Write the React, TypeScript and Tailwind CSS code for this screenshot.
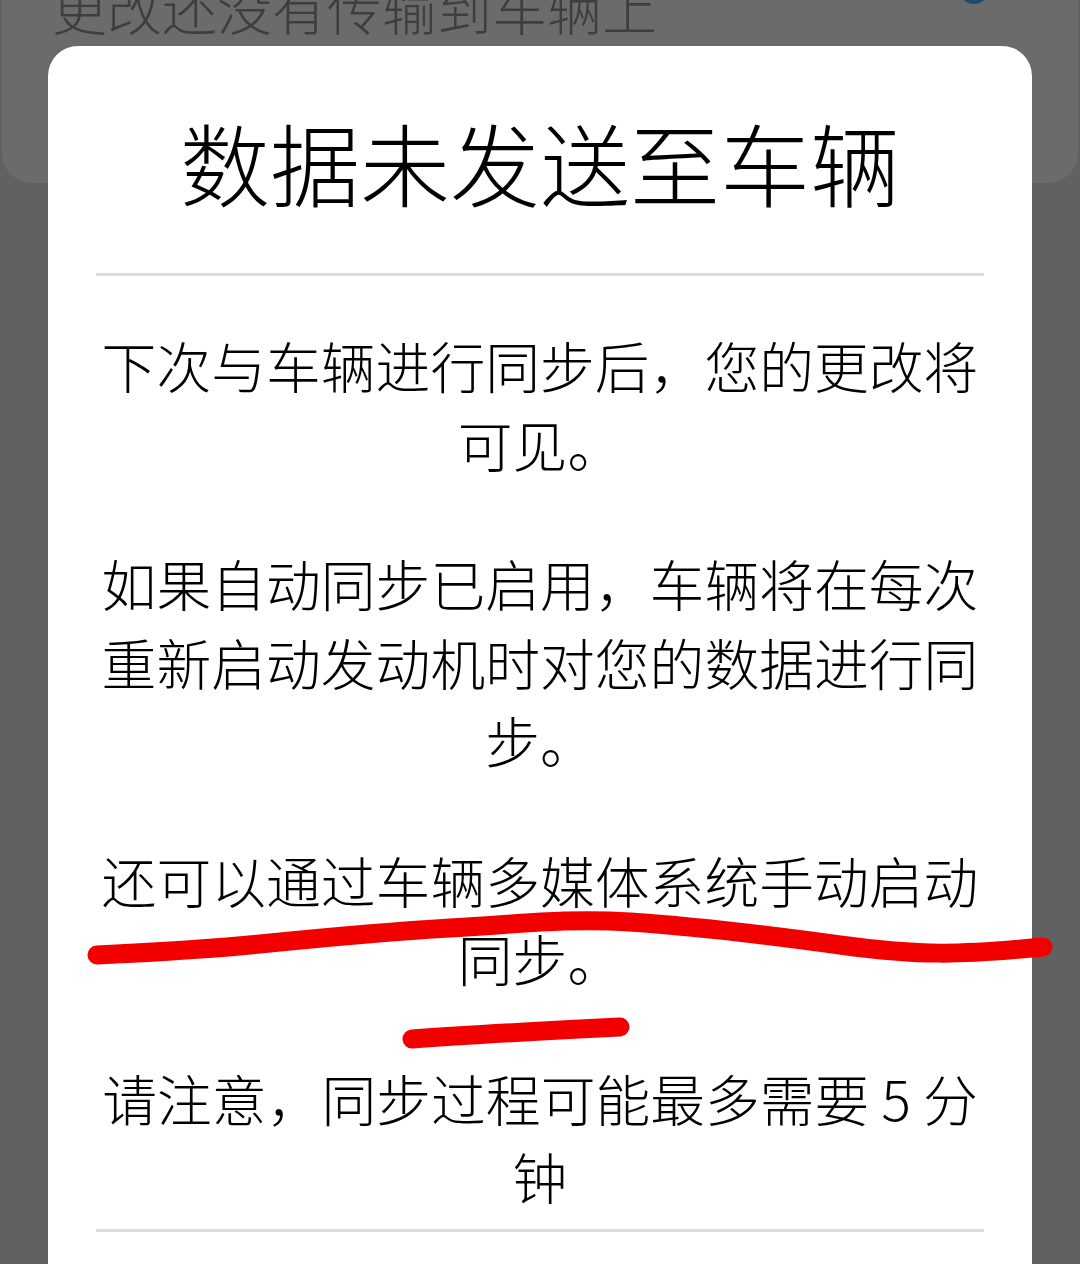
const paragraphs = [
  '下次与车辆进行同步后，您的更改将可见。',
  '如果自动同步已启用，车辆将在每次重新启动发动机时对您的数据进行同步。',
  '还可以通过车辆多媒体系统手动启动同步。',
  '请注意，同步过程可能最多需要 5 分钟',
];

export default function App() {
  return (
    <div
      className="relative w-[1080px] h-[1264px] overflow-hidden bg-[#616161]"
      style={{ fontFamily: '"Noto Sans CJK SC", "Noto Sans", sans-serif' }}
    >
      {/* page behind the scrim */}
      <div className="relative mx-[2px] -mt-[48px] h-[231px] rounded-b-[30px] bg-[#6b6b6b] px-[50px] pt-[22px]">
        <div className="text-[55px] leading-[64px] font-light text-[#3e3e3e]">更改还没有传输到车辆上</div>
        <div className="absolute left-[957px] top-[22px] h-[30px] w-[30px] rounded-full bg-[#1d4a72]" />
      </div>

      {/* dialog */}
      <div className="absolute left-[48px] top-[46px] bottom-0 w-[984px] rounded-t-[30px] bg-white">
        <div className="flex flex-col items-center px-[48px] pt-[61px] text-black">
          <h1 className="text-[90px] leading-[108px] font-light">数据未发送至车辆</h1>
          <div className="mt-[58px] h-[3px] w-full bg-[#dcdcdc]" />
          <div className="mt-[49px] flex w-full flex-col gap-[61px]">
            {paragraphs.map((p) => (
              <p key={p} className="text-center text-[54.8px] leading-[78.5px] font-light">
                {p}
              </p>
            ))}
          </div>
          <div className="mt-[14px] h-[3px] w-full bg-[#dcdcdc]" />
        </div>
      </div>

      {/* red hand-drawn marks */}
      <svg className="pointer-events-none absolute left-0 top-0" width="1080" height="1264">
        <path
          d="M97 955 C 160 952, 200 950, 260 944 S 380 932, 450 928 S 570 918, 630 922 S 760 934, 840 945 S 960 955, 1043 947"
          fill="none"
          stroke="#f20000"
          strokeWidth="19"
          strokeLinecap="round"
        />
        <path
          d="M412 1039 C 480 1034, 560 1030, 620 1027"
          fill="none"
          stroke="#f20000"
          strokeWidth="19"
          strokeLinecap="round"
        />
      </svg>
    </div>
  );
}
